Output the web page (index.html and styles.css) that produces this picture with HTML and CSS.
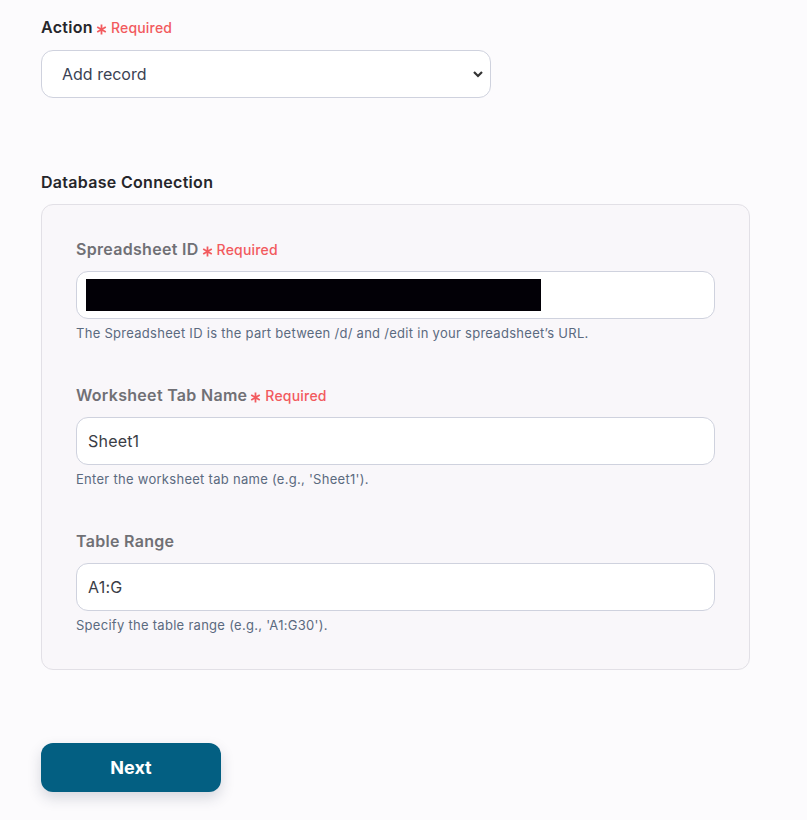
FILE: index.html
```html
<!DOCTYPE html>
<html>
<head>
<meta charset="utf-8">
<link rel="stylesheet" href="styles.css">
</head>
<body>
<div class="page">
  <div class="field top-field">
    <div class="label dark">Action <span class="req"><svg class="star" viewBox="0 0 10 10"><path d="M5 0.5V9.5M1.1 2.75L8.9 7.25M1.1 7.25L8.9 2.75"/></svg>Required</span></div>
    <div class="select">
      <span>Add record</span>
      <svg class="chev" viewBox="0 0 12 8"><path d="M2 2L6 6L10 2"/></svg>
    </div>
  </div>

  <div class="section">
    <div class="label dark">Database Connection</div>
    <div class="panel">
      <div class="field">
        <div class="label">Spreadsheet ID <span class="req"><svg class="star" viewBox="0 0 10 10"><path d="M5 0.5V9.5M1.1 2.75L8.9 7.25M1.1 7.25L8.9 2.75"/></svg>Required</span></div>
        <div class="input"><div class="redact"></div></div>
        <div class="help">The Spreadsheet ID is the part between /d/ and /edit in your spreadsheet’s URL.</div>
      </div>
      <div class="field">
        <div class="label">Worksheet Tab Name <span class="req"><svg class="star" viewBox="0 0 10 10"><path d="M5 0.5V9.5M1.1 2.75L8.9 7.25M1.1 7.25L8.9 2.75"/></svg>Required</span></div>
        <div class="input">Sheet1</div>
        <div class="help">Enter the worksheet tab name (e.g., 'Sheet1').</div>
      </div>
      <div class="field">
        <div class="label">Table Range</div>
        <div class="input">A1:G</div>
        <div class="help">Specify the table range (e.g., 'A1:G30').</div>
      </div>
    </div>
  </div>

  <button class="next">Next</button>
</div>
</body>
</html>
```

FILE: styles.css
```css
* { box-sizing: border-box; }
html, body { margin: 0; padding: 0; }
body {
  background: #fcfbfd;
  font-family: Inter, "Noto Sans", sans-serif;
  width: 807px;
  height: 820px;
  overflow: hidden;
}
.page {
  padding: 17px 0 0 41px;
  display: flex;
  flex-direction: column;
  align-items: flex-start;
}
.field { display: flex; flex-direction: column; }
.top-field { width: 450px; }
.label {
  display: flex;
  align-items: center;
  font-size: 16px;
  line-height: 20px;
  font-weight: 600;
  color: #707075;
  height: 20px;
  letter-spacing: 0.3px;
}
.label.dark {
  color: #26262b;
}
.req {
  display: inline-flex;
  align-items: center;
  margin-left: 3px;
  margin-top: 2px;
  color: #f25a5e;
  font-size: 14px;
  font-weight: 500;
  letter-spacing: 0.2px;
}
.star {
  width: 11px;
  height: 11px;
  margin-right: 4px;
  margin-top: 2px;
  stroke: #f25a5e;
  stroke-width: 1.6;
  fill: none;
}
.select {
  margin-top: 13px;
  height: 48px;
  width: 450px;
  border: 1px solid #cfd2de;
  border-radius: 12px;
  background: #fff;
  display: flex;
  align-items: center;
  justify-content: space-between;
  padding: 0 6px 0 20px;
  font-size: 16px;
  color: #3a4253;
}
.chev {
  width: 12px;
  height: 8px;
  stroke: #333;
  stroke-width: 2.2;
  fill: none;
}
.section { margin-top: 74px; display: flex; flex-direction: column; }
.panel {
  margin-top: 12px;
  width: 709px;
  border: 1px solid #e2e0e6;
  border-radius: 12px;
  background: #f9f7fa;
  padding: 34px 34px 36px 34px;
  display: flex;
  flex-direction: column;
  gap: 44px;
}
.input {
  margin-top: 12px;
  height: 48px;
  width: 639px;
  border: 1px solid #cfd2de;
  border-radius: 12px;
  background: #fff;
  display: flex;
  align-items: center;
  padding: 0 11px;
  font-size: 16px;
  color: #3a3d45;
  letter-spacing: 0.2px;
}
.redact {
  width: 455px;
  height: 32px;
  margin-left: -2px;
  background: #020006;
}
.help {
  margin-top: 6px;
  font-size: 13px;
  line-height: 16px;
  color: #5b6a7f;
  letter-spacing: 0.28px;
}
.next {
  margin-top: 73px;
  width: 180px;
  height: 49px;
  border: none;
  border-radius: 12px;
  background: #035f82;
  color: #fff;
  font-family: Inter, "Noto Sans", sans-serif;
  font-size: 18px;
  font-weight: 700;
  box-shadow: 0 6px 14px rgba(40, 50, 80, 0.18);
}
```
